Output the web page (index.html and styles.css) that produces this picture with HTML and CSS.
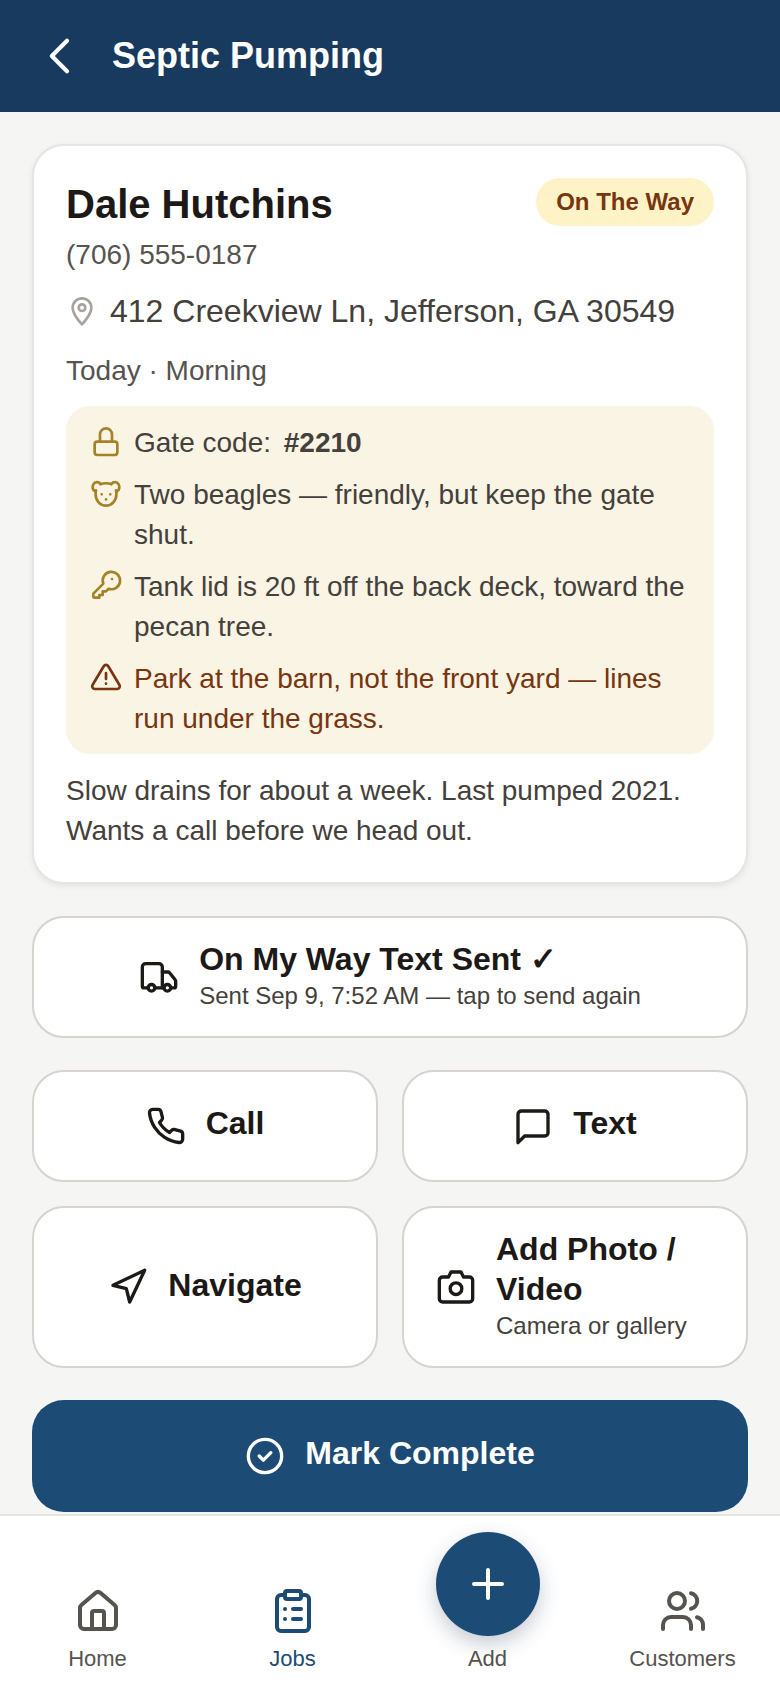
FILE: index.html
```html
<!DOCTYPE html>
<html lang="en">
<head>
<meta charset="utf-8">
<title>Septic Pumping</title>
<link rel="stylesheet" href="styles.css">
</head>
<body>
<div class="app">
  <header class="topbar">
    <svg class="back" viewBox="0 0 24 24"><path d="M15 5.500 8.500 12l6.500 6.500"/></svg>
    <h1>Septic Pumping</h1>
  </header>
  <main class="content">
    <section class="card">
      <div class="card-head">
        <h2>Dale Hutchins</h2>
        <span class="badge">On The Way</span>
      </div>
      <div class="phone">(706) 555-0187</div>
      <div class="address">
        <svg class="pin" viewBox="0 0 24 24"><path d="M12 22s-7-7.200-7-12.500a7 7 0 0 1 14 0C19 14.800 12 22 12 22z"/><circle cx="12" cy="9.500" r="2.500"/></svg>
        <span>412 Creekview Ln, Jefferson, GA 30549</span>
      </div>
      <div class="when">Today · Morning</div>
      <div class="notes">
        <div class="note note-gate">
          <svg class="note-icon" viewBox="0 0 24 24"><rect x="3.500" y="12.500" width="17" height="10" rx="2"/><path d="M7.500 12.500V7a4.500 4.500 0 0 1 9 0v5.500"/></svg>
          <span>Gate code: <b class="code">#2210</b></span>
        </div>
        <div class="note">
          <svg class="note-icon" viewBox="0 0 24 24"><path d="M8 5.300c2.500-.8 5.500-.8 8 0"/><path d="M8 5.300C6.500 3.500 3.800 3.300 2.500 5.500 1.500 7.300 2 10 3.800 10.800"/><path d="M16 5.300C17.500 3.500 20.200 3.300 21.500 5.500 22.500 7.300 22 10 20.200 10.800"/><path d="M4.500 10c-.2.800-.3 1.900-.3 2.900 0 4.800 3.400 8.600 7.800 8.600s7.800-3.800 7.800-8.600c0-1-.1-2.100-.3-2.900"/><path d="M8.800 13h.01M15.200 13h.01M12 16.800h.01"/></svg>
          <span>Two beagles — friendly, but keep the gate shut.</span>
        </div>
        <div class="note">
          <svg class="note-icon" viewBox="0 0 24 24"><path d="M2.500 18.500 10 11a6.500 6.500 0 1 1 4 3.800l-2 2h-2.500V19.500H7v2H3.500a1 1 0 0 1-1-1z"/><path d="M16.500 7.500h.01"/></svg>
          <span>Tank lid is 20 ft off the back deck, toward the pecan tree.</span>
        </div>
        <div class="note note-warn">
          <svg class="note-icon" viewBox="0 0 24 24"><path d="M10.300 3.900 1.900 18a2 2 0 0 0 1.700 3h16.800a2 2 0 0 0 1.700-3L13.700 3.900a2 2 0 0 0-3.400 0z"/><path d="M12 9v4.500M12 17h.01"/></svg>
          <span>Park at the barn, not the front yard — lines run under the grass.</span>
        </div>
      </div>
      <p class="desc">Slow drains for about a week. Last pumped 2021. Wants a call before we head out.</p>
    </section>

    <button class="btn btn-wide">
      <svg class="btn-icon" viewBox="0 0 24 24"><path d="M14 18.500V6a2 2 0 0 0-2-2H4a2 2 0 0 0-2 2v11.500a1 1 0 0 0 1 1h2.500"/><path d="M14 9h3.500a1 1 0 0 1 .8.400l3.400 4.300a1 1 0 0 1 .3.600V17.500a1 1 0 0 1-1 1h-1.500"/><path d="M9.500 18.500h5.500"/><circle cx="7.500" cy="18.500" r="2"/><circle cx="17" cy="18.500" r="2"/></svg>
      <span class="btn-text btn-text-wide"><strong>On My Way Text Sent ✓</strong><small>Sent Sep 9, 7:52 AM — tap to send again</small></span>
    </button>

    <div class="grid">
      <button class="btn btn-short">
        <svg class="btn-icon" viewBox="0 0 24 24"><path d="M22 16.900v3a2 2 0 0 1-2.200 2 19.800 19.800 0 0 1-8.600-3.100 19.500 19.500 0 0 1-6-6A19.800 19.800 0 0 1 2.100 4.200 2 2 0 0 1 4.100 2h3a2 2 0 0 1 2 1.700c.1 1 .4 1.900.7 2.800a2 2 0 0 1-.5 2.100L8.100 9.900a16 16 0 0 0 6 6l1.300-1.300a2 2 0 0 1 2.100-.4c.9.300 1.800.6 2.800.7a2 2 0 0 1 1.700 2z"/></svg>
        <span class="btn-text"><strong>Call</strong></span>
      </button>
      <button class="btn btn-short">
        <svg class="btn-icon" viewBox="0 0 24 24"><path d="M21 16a2 2 0 0 1-2 2H7l-4 4V5a2 2 0 0 1 2-2h14a2 2 0 0 1 2 2z"/></svg>
        <span class="btn-text"><strong>Text</strong></span>
      </button>
      <button class="btn btn-tall">
        <svg class="btn-icon" viewBox="0 0 24 24"><path d="M3 11 22 2l-9 19-2-8z"/></svg>
        <span class="btn-text"><strong>Navigate</strong></span>
      </button>
      <button class="btn btn-tall btn-photo">
        <svg class="btn-icon" viewBox="0 0 24 24"><path d="M22 19a2 2 0 0 1-2 2H4a2 2 0 0 1-2-2V8a2 2 0 0 1 2-2h3.500l1.500-3h6l1.500 3H20a2 2 0 0 1 2 2z"/><circle cx="12" cy="13" r="3.500"/></svg>
        <span class="btn-text"><strong>Add Photo / Video</strong><small>Camera or gallery</small></span>
      </button>
    </div>

    <button class="btn-primary">
      <svg class="btn-icon" viewBox="0 0 24 24"><circle cx="12" cy="12" r="10"/><path d="m8.500 12 2.500 2.500 4.500-4.500"/></svg>
      <span class="primary-label">Mark Complete</span>
    </button>
  </main>

  <nav class="tabs">
    <a class="tab">
      <svg class="tab-icon" viewBox="0 0 24 24"><path d="M3 10.500a2 2 0 0 1 .7-1.500l7-6a2 2 0 0 1 2.600 0l7 6a2 2 0 0 1 .7 1.500V19a2 2 0 0 1-2 2H5a2 2 0 0 1-2-2z"/><path d="M9 21v-8a1 1 0 0 1 1-1h4a1 1 0 0 1 1 1v8"/></svg>
      <span>Home</span>
    </a>
    <a class="tab tab-active">
      <svg class="tab-icon" viewBox="0 0 24 24"><rect x="8" y="2" width="8" height="4" rx="1"/><path d="M16 4h2a2 2 0 0 1 2 2v14a2 2 0 0 1-2 2H6a2 2 0 0 1-2-2V6a2 2 0 0 1 2-2h2"/><path d="M12 11h4M12 16h4M8 11h.01M8 16h.01"/></svg>
      <span>Jobs</span>
    </a>
    <a class="tab">
      <span class="fab"><svg viewBox="0 0 24 24"><path d="M5 12h14M12 5v14"/></svg></span>
      <span>Add</span>
    </a>
    <a class="tab">
      <svg class="tab-icon" viewBox="0 0 24 24"><path d="M16 21v-2a4 4 0 0 0-4-4H6a4 4 0 0 0-4 4v2"/><circle cx="9" cy="7" r="4"/><path d="M22 21v-2a4 4 0 0 0-3-3.900M16 3.100a4 4 0 0 1 0 7.800"/></svg>
      <span>Customers</span>
    </a>
  </nav>
</div>
</body>
</html>
```

FILE: styles.css
```css
* { box-sizing: border-box; }
html, body { margin: 0; padding: 0; }
body { font-family: "Liberation Sans", Arial, sans-serif; color: #1c1917; background: #f5f5f4; }
svg { fill: none; stroke: currentColor; stroke-linecap: round; stroke-linejoin: round; stroke-width: 2; flex: none; display: block; }

.app { width: 780px; height: 1688px; display: flex; flex-direction: column; overflow: hidden; }

.topbar { flex: none; height: 112px; background: #173a5e; color: #fff; display: flex; align-items: center; padding: 0 32px; gap: 24px; }
.back { width: 56px; height: 56px; stroke-width: 1.800; }
.topbar h1 { margin: 0; font-size: 36px; line-height: 48px; font-weight: 700; }

.content { flex: 1; min-height: 0; overflow: hidden; padding: 32px 32px 0; display: flex; flex-direction: column; gap: 32px; }

.card { flex: none; background: #fff; border: 2px solid #e7e5e4; border-radius: 32px; padding: 32px 32px 31px; box-shadow: 0 2px 6px rgba(0,0,0,.08); }
.card-head { display: flex; justify-content: space-between; align-items: flex-start; }
.card-head h2 { margin: 0; font-size: 40px; line-height: 52px; height: 48px; font-weight: 700; color: #1c1917; }
.badge { background: #fef3c7; color: #78350f; font-size: 24px; line-height: 32px; font-weight: 700; padding: 8px 20px; border-radius: 999px; }
.phone { margin-top: 9px; font-size: 28px; line-height: 40px; color: #57534e; }
.address { margin-top: 14px; display: flex; align-items: center; gap: 12px; font-size: 32px; line-height: 44px; color: #44403c; }
.pin { width: 32px; height: 32px; color: #a8a29e; }
.when { margin-top: 18px; font-size: 28px; line-height: 40px; color: #57534e; }

.notes { margin-top: 15px; background: #f9f4e3; border-radius: 24px; padding: 17px 24px 15px; display: flex; flex-direction: column; gap: 12px; }
.note { display: flex; gap: 12px; font-size: 28px; line-height: 40px; color: #44403c; }
.note-icon { width: 32px; height: 32px; color: #a58225; margin-top: 2px; }
.note-warn { color: #78350f; }
.note-warn .note-icon { color: #78350f; }
.code { margin-left: 5px; }

.desc { margin: 17px 0 0; font-size: 28px; line-height: 40px; color: #44403c; }

.btn { background: #fff; border: 2px solid #d6d3d1; border-radius: 32px; font-family: inherit; color: #1c1917; display: flex; align-items: center; justify-content: center; gap: 20px; padding: 0 32px; }
.btn-wide { flex: none; height: 122px; width: 100%; }
.btn-icon { width: 40px; height: 40px; }
.btn-text { display: flex; flex-direction: column; text-align: left; }
.btn-text strong { font-size: 32px; line-height: 40px; font-weight: 700; }
.btn-text small { font-size: 24px; line-height: 32px; color: #44403c; margin-top: 1px; }
.btn-text-wide { margin-bottom: 3px; }

.grid { flex: none; display: grid; grid-template-columns: 346px 346px; column-gap: 24px; row-gap: 24px; }
.btn-short { height: 112px; }
.btn-tall { height: 162px; }
.btn-short .btn-text { margin-bottom: 6px; }
.btn-tall .btn-text { margin-bottom: 4px; }
.btn-photo .btn-text { margin-bottom: 3px; }

.btn-primary { flex: none; height: 112px; width: 716px; background: #1c4b75; color: #fff; border: 0; border-radius: 32px; font-family: inherit; font-size: 32px; font-weight: 700; display: flex; align-items: center; justify-content: center; gap: 20px; }
.primary-label { margin-bottom: 6px; }

.tabs { flex: none; height: 174px; background: #fff; border-top: 2px solid #e7e5e4; display: grid; grid-template-columns: repeat(4, 1fr); }
.tab { position: relative; display: flex; flex-direction: column; align-items: center; justify-content: flex-end; padding-bottom: 13px; font-size: 22px; line-height: 32px; color: #57534e; gap: 8px; }
.tab-active { color: #1c4b75; }
.tab-icon { width: 48px; height: 48px; }
.fab { position: absolute; left: 50%; top: 16px; margin-left: -52px; width: 104px; height: 104px; border-radius: 50%; background: #1c4b75; color: #fff; display: flex; align-items: center; justify-content: center; box-shadow: 0 8px 20px rgba(28,50,80,.25); }
.fab svg { width: 48px; height: 48px; }
```
